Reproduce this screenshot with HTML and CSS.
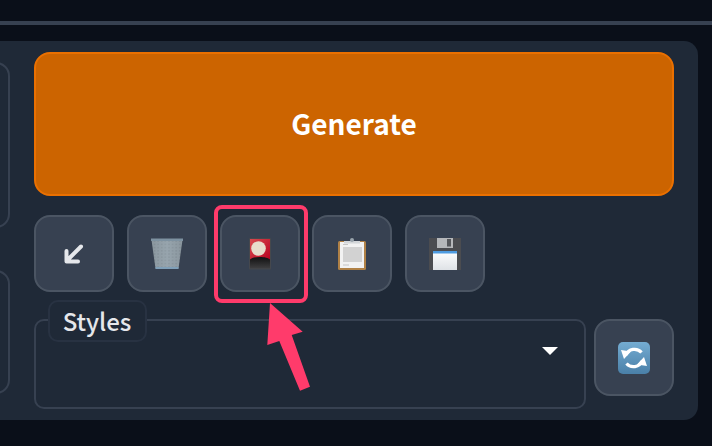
FILE: index.html
```html
<!DOCTYPE html>
<html lang="en">
<head>
<meta charset="utf-8">
<title>Generate</title>
<link rel="stylesheet" href="styles.css">
</head>
<body>
<div class="page">
  <hr class="divider">
  <main class="panel">
    <div class="left-col">
      <div class="stub stub-top"></div>
      <div class="stub stub-bottom"></div>
    </div>
    <div class="right-col">
      <button class="generate"><span class="generate-text">Generate</span></button>
      <div class="tools">
        <button class="tool" aria-label="Send to inputs">
          <svg class="icon" viewBox="0 0 32 32"><path d="M23 8.500 9 22.500M8.500 13v10.500H20" fill="none" stroke="#e5e7eb" stroke-width="4" stroke-linecap="round" stroke-linejoin="round"/></svg>
        </button>
        <button class="tool" aria-label="Clear">
          <svg class="icon" viewBox="0 0 32 32">
            <defs>
              <pattern id="mesh" width="3.600" height="3.200" patternUnits="userSpaceOnUse"><path d="M0 0 1.800 3.200 3.600 0M0 3.200 1.800 0 3.600 3.200" fill="none" stroke="#b4c1ca" stroke-width=".7"/></pattern>
              <linearGradient id="bin" x1="0" x2="1" y1="0" y2="0"><stop offset="0" stop-color="#2f363e"/><stop offset=".5" stop-color="#56626c"/><stop offset="1" stop-color="#2c333b"/></linearGradient>
            </defs>
            <path d="M.5 2h31L27.500 30.500h-23z" fill="url(#bin)"/>
            <path d="M.5 2h31L27.500 30.500h-23z" fill="url(#mesh)"/>
            <path d="M0 .5h32V3H0z" fill="#7e92a1"/>
            <path d="M4.500 29h23v2h-23z" fill="#7f9fb8"/>
          </svg>
        </button>
        <button class="tool tool-marked" aria-label="Extra networks">
          <svg class="icon" viewBox="0 0 32 32">
            <defs>
              <linearGradient id="cardtop" x1="0" x2="1" y1="0" y2="1"><stop offset="0" stop-color="#d84a50"/><stop offset="1" stop-color="#b8001e"/></linearGradient>
              <linearGradient id="cardbase" x1="0" x2="0" y1="0" y2="1"><stop offset="0" stop-color="#111"/><stop offset="1" stop-color="#3f3f41"/></linearGradient>
            </defs>
            <rect x="5" y="0" width="22" height="31.500" rx="1" fill="#45484d"/>
            <rect x="6" y="1" width="20" height="22" fill="url(#cardtop)"/>
            <circle cx="14.500" cy="10.500" r="7.300" fill="#e8dccb"/>
            <path d="M6 21.500c3-3.500 17-3.500 20 0v9H6z" fill="url(#cardbase)"/>
          </svg>
        </button>
        <button class="tool" aria-label="Paste">
          <svg class="icon" viewBox="0 0 32 32">
            <rect x="2" y="3" width="28" height="29" rx="1.500" fill="#b08146"/>
            <rect x="4" y="4" width="24" height="26" fill="#f2f2f2"/>
            <rect x="7" y="9" width="19" height="15" fill="#d2d2d2"/>
            <path d="M7 6.500h5M7 27h6" stroke="#c4c4c4" stroke-width="1"/>
            <path d="M8 3h16v2.500H8z" fill="#d3d6d9"/>
            <circle cx="16" cy="2" r="2" fill="#9aa4ad"/>
          </svg>
        </button>
        <button class="tool" aria-label="Save style">
          <svg class="icon" viewBox="0 0 32 32">
            <defs>
              <linearGradient id="label" x1="0" x2="0" y1="0" y2="1"><stop offset="0" stop-color="#fff"/><stop offset="1" stop-color="#dfe2e6"/></linearGradient>
            </defs>
            <path d="M0 0h32v32H0z" fill="#4b4c50"/>
            <rect x="8" y="0" width="16" height="10" fill="#b5b7ba"/>
            <rect x="18" y="1" width="4" height="7.500" fill="#55575b"/>
            <rect x="4" y="13" width="24" height="19" fill="url(#label)"/>
            <rect x="4" y="13" width="24" height="2.500" fill="#4e9be0"/>
          </svg>
        </button>
      </div>
      <div class="styles-row">
        <div class="field">
          <span class="field-label">Styles</span>
          <span class="caret"></span>
        </div>
        <button class="tool" aria-label="Refresh">
          <svg class="icon" viewBox="0 0 32 32">
            <defs>
              <linearGradient id="tile" x1="0" x2="0" y1="0" y2="1"><stop offset="0" stop-color="#74acd2"/><stop offset="1" stop-color="#4a80a8"/></linearGradient>
            </defs>
            <rect width="32" height="32" rx="5" fill="url(#tile)"/>
            <path d="M8 13A9 8.500 0 0 1 23.500 10.500" fill="none" stroke="#fff" stroke-width="3.200"/>
            <path d="M24 19A9 8.500 0 0 1 8.500 21.500" fill="none" stroke="#fff" stroke-width="3.200"/>
            <path d="M3 8 13 9.500 6 17zM29 24 19 22.500 26 15z" fill="#fff"/>
          </svg>
        </button>
      </div>
    </div>
  </main>
  <svg class="pointer" viewBox="0 0 712 446" aria-hidden="true">
    <path d="M270 303 302.700 331.700 291.700 335 310 386.700 300 390.700 279.300 341 267.300 345z" fill="#ff3b6b"/>
  </svg>
</div>
</body>
</html>
```
FILE: styles.css
```css
html, body {
  margin: 0;
  padding: 0;
  background: #0a0f19;
}
.page {
  position: relative;
  width: 712px;
  height: 446px;
  overflow: hidden;
  font-family: "Noto Sans CJK JP", "Noto Sans", sans-serif;
}
.divider {
  margin: 0;
  border: 0;
  height: 4px;
  background: #374151;
  position: relative;
  top: 21px;
}
.panel {
  display: flex;
  width: 738px;
  height: 379px;
  box-sizing: border-box;
  margin: 37px 0 0 -40px;
  padding: 11px 24px 11px 0;
  background: #1f2937;
  border-radius: 14px;
}
.left-col {
  display: flex;
  flex-direction: column;
  gap: 42px;
  width: 50px;
  margin-right: 24px;
  padding-top: 10px;
}
.stub {
  box-sizing: border-box;
  border: 2px solid #374151;
  border-radius: 14px;
}
.stub-top { height: 166px; }
.stub-bottom { height: 124px; }
.right-col {
  display: flex;
  flex-direction: column;
  width: 640px;
}
.generate {
  height: 144px;
  box-sizing: border-box;
  padding: 0 0 2px;
  background: #cc6400;
  border: 2px solid #ea7000;
  border-radius: 16px;
  color: #fff;
  font: 700 28px/1 "Noto Sans CJK JP", "Noto Sans", sans-serif;
}
.generate-text {
  display: block;
}
.tools {
  display: flex;
  gap: 12.75px;
  margin-top: 19px;
}
.tool {
  position: relative;
  display: flex;
  align-items: center;
  justify-content: center;
  flex: none;
  width: 80px;
  height: 77px;
  box-sizing: border-box;
  padding: 0;
  background: #374151;
  border: 2px solid #4b5563;
  border-radius: 16px;
}
.tool-marked::after {
  content: "";
  position: absolute;
  top: -12px;
  right: -10px;
  bottom: -13px;
  left: -8px;
  border: 4px solid #ff3b6b;
  border-radius: 8px;
}
.icon {
  display: block;
  width: 32px;
  height: 32px;
}
.styles-row {
  display: flex;
  align-items: flex-start;
  gap: 8px;
  margin-top: 27px;
}
.field {
  position: relative;
  display: flex;
  justify-content: flex-end;
  align-items: flex-start;
  flex: none;
  width: 552px;
  height: 90px;
  box-sizing: border-box;
  padding: 26px 26px 0 0;
  border: 2px solid #374151;
  border-radius: 10px;
}
.field-label {
  position: absolute;
  top: -21px;
  left: 12px;
  box-sizing: border-box;
  width: 99px;
  height: 42px;
  border: 2px solid #283242;
  border-radius: 10px;
  background: #1f2937;
  color: #e5e7eb;
  font-size: 24px;
  font-weight: 500;
  line-height: 37px;
  text-align: center;
  padding-right: 1px;
}
.caret {
  width: 0;
  height: 0;
  border-left: 8px solid transparent;
  border-right: 8px solid transparent;
  border-top: 8px solid #fff;
}
.pointer {
  position: absolute;
  top: 0;
  left: 0;
  width: 712px;
  height: 446px;
  pointer-events: none;
}
```
